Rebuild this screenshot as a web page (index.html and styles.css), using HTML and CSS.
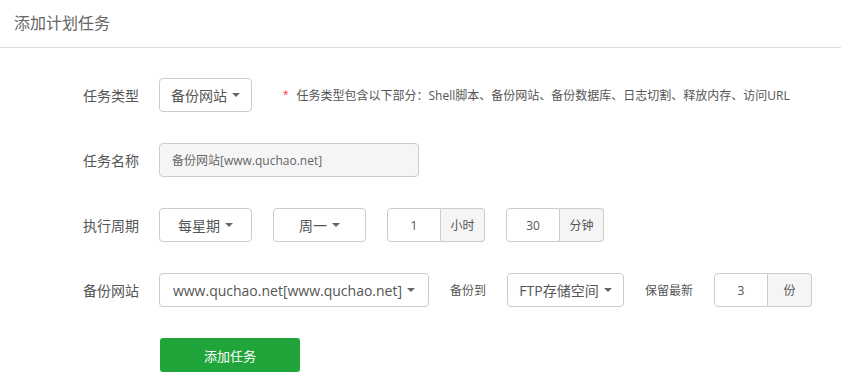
FILE: index.html
```html
<!DOCTYPE html>
<html lang="zh-CN">
<head>
    <meta charset="UTF-8">
    <meta name="viewport" content="width=device-width, initial-scale=1">
    <title>添加计划任务</title>
    <link rel="stylesheet" href="styles.css">
</head>
<body>
<div class="panel">
    <div class="panel-title">添加计划任务</div>
    <form class="task-form">
        <div class="line">
            <span class="tname">任务类型</span>
            <div class="info-r">
                <button type="button" class="dropdown w93">备份网站<span class="caret"></span></button>
                <span class="tips"><em>*</em>任务类型包含以下部分：Shell脚本、备份网站、备份数据库、日志切割、释放内存、访问URL</span>
            </div>
        </div>
        <div class="line">
            <span class="tname">任务名称</span>
            <div class="info-r">
                <input class="bt-input name-input" type="text" value="备份网站[www.quchao.net]" disabled>
            </div>
        </div>
        <div class="line">
            <span class="tname">执行周期</span>
            <div class="info-r">
                <button type="button" class="dropdown w93">每星期<span class="caret"></span></button>
                <button type="button" class="dropdown w93">周一<span class="caret"></span></button>
                <div class="input-group">
                    <input class="bt-input num" type="text" value="1">
                    <span class="addon">小时</span>
                </div>
                <div class="input-group">
                    <input class="bt-input num" type="text" value="30">
                    <span class="addon">分钟</span>
                </div>
            </div>
        </div>
        <div class="line">
            <span class="tname">备份网站</span>
            <div class="info-r">
                <button type="button" class="dropdown site">www.quchao.net[www.quchao.net]<span class="caret"></span></button>
                <span class="inline-label">备份到</span>
                <button type="button" class="dropdown w117">FTP存储空间<span class="caret"></span></button>
                <span class="inline-label">保留最新</span>
                <div class="input-group">
                    <input class="bt-input num" type="text" value="3">
                    <span class="addon">份</span>
                </div>
            </div>
        </div>
        <div class="line submit">
            <button type="button" class="btn-green">添加任务</button>
        </div>
    </form>
</div>
</body>
</html>
```

FILE: styles.css
```css
* {
    margin: 0;
    padding: 0;
    box-sizing: border-box;
}

body {
    font-family: "Open Sans", "Noto Sans CJK SC", sans-serif;
    color: #555;
    background: #fff;
}

.panel-title {
    height: 48px;
    padding-left: 14px;
    line-height: 46px;
    font-size: 16px;
    color: #666;
    border-bottom: 1px solid #ddd;
}

.task-form {
    padding: 30px 0 0 39px;
}

.line {
    display: flex;
    align-items: center;
    height: 34px;
    margin-bottom: 31px;
}

.tname {
    flex: none;
    width: 120px;
    padding-right: 20px;
    text-align: right;
    font-size: 14px;
    color: #555;
}

.info-r {
    display: flex;
    align-items: center;
    gap: 21px;
}

.dropdown {
    flex: none;
    display: flex;
    align-items: center;
    justify-content: center;
    height: 34px;
    padding: 0;
    border: 1px solid #ccc;
    border-radius: 4px;
    background: #fff;
    font-family: inherit;
    font-size: 14px;
    color: #555;
    white-space: nowrap;
}

.w93 {
    width: 93px;
}

.w117 {
    width: 117px;
}

.site {
    width: 270px;
}

.caret {
    display: inline-block;
    margin-left: 5px;
    border-top: 4px solid #666;
    border-left: 4px solid transparent;
    border-right: 4px solid transparent;
}

.tips {
    margin-left: 10px;
    font-size: 12px;
    color: #555;
    white-space: nowrap;
}

.tips em {
    font-style: normal;
    font-size: 10px;
    color: #f33;
    margin-right: 8px;
    vertical-align: 2px;
}

.bt-input {
    height: 34px;
    border: 1px solid #ccc;
    border-radius: 4px;
    font-family: inherit;
    font-size: 12px;
    color: #555;
    background: #fff;
}

.name-input {
    width: 260px;
    padding: 0 12px;
    background: #f5f5f5;
    color: #666;
}

.input-group {
    flex: none;
    display: flex;
}

.input-group .num {
    width: 54px;
    text-align: center;
    border-radius: 4px 0 0 4px;
}

.addon {
    display: flex;
    align-items: center;
    justify-content: center;
    width: 44px;
    height: 34px;
    border: 1px solid #ccc;
    border-left: none;
    border-radius: 0 4px 4px 0;
    background: #f5f5f5;
    font-size: 12px;
    color: #555;
}

.inline-label {
    flex: none;
    font-size: 12px;
    color: #555;
}

.submit {
    padding-left: 121px;
}

.btn-green {
    width: 140px;
    height: 34px;
    border: none;
    border-radius: 3px;
    background: #20a53a;
    color: #fff;
    font-family: inherit;
    font-size: 13px;
}
```
